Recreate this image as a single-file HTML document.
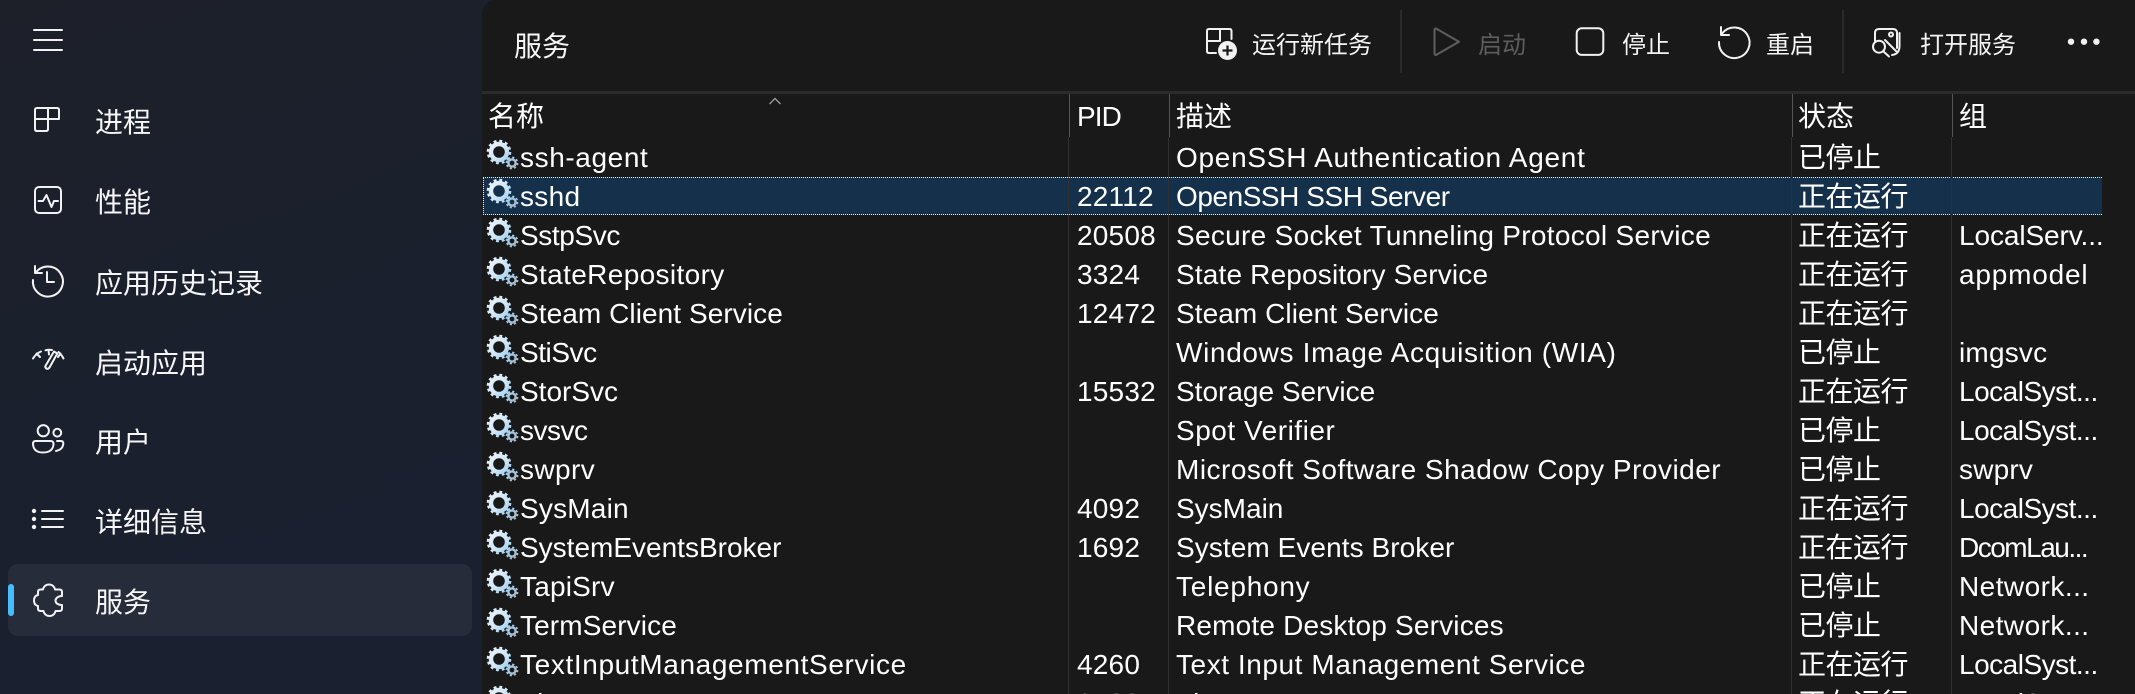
<!DOCTYPE html>
<html lang="zh"><head><meta charset="utf-8"><title>服务</title>
<style>
html,body{margin:0;padding:0;width:2135px;height:694px;overflow:hidden;background:#1b202d}
*{box-sizing:border-box}
body{position:relative;font-family:"Liberation Sans","Noto Sans CJK SC",sans-serif;color:#fff}
#side{position:absolute;left:0;top:0;width:482px;height:694px;background:linear-gradient(160deg,#1d2029 0%,#1b202d 40%,#1a2030 100%)}
#main{position:absolute;left:482px;top:0;width:1653px;height:694px;background:#191919;border-top-left-radius:14px}
.t{position:absolute;white-space:nowrap;font-family:"Noto Sans CJK SC",sans-serif}
.nav{font-size:28px;line-height:40px;left:95px;color:#f6f6f6}
.tb{font-size:24px;line-height:34px;top:26px;color:#f4f4f4}
.r{position:absolute;left:0;width:2135px;height:39px;font-size:28px;line-height:39px;white-space:nowrap}
.r span,.h span{position:absolute;top:0}
.n{left:520px}.p{left:1077px}.d{left:1176px}.r .s{left:1798px;top:-1px;letter-spacing:-.5px;font-family:"Noto Sans CJK SC",sans-serif}.g{left:1959px}
.h{position:absolute;left:0;top:96px;width:2135px;height:39px;font-size:28px;line-height:39px;font-family:"Noto Sans CJK SC",sans-serif}
#sel{position:absolute;left:483px;top:177px;width:1619px;height:38px;background:#14304a;border:1px dotted #e8eef4;border-right:none}
.v{position:absolute;width:1px;top:137px;height:557px;background:#303030}
.vh{position:absolute;width:1px;top:94px;height:43px;background:#555}
#hl{position:absolute;left:482px;top:91px;width:1653px;height:3px;background:#2b2b2b}
#ov{position:absolute;left:0;top:0}
</style></head><body>
<div id="side"></div>
<div id="main"></div>
<div style="position:absolute;left:8px;top:564px;width:464px;height:72px;border-radius:10px;background:#272c3b"></div>
<div style="position:absolute;left:8px;top:584px;width:6px;height:32px;border-radius:3px;background:#47bdff"></div>
<div class="t nav" style="top:101px">进程</div>
<div class="t nav" style="top:181px">性能</div>
<div class="t nav" style="top:262px">应用历史记录</div>
<div class="t nav" style="top:342px">启动应用</div>
<div class="t nav" style="top:421px">用户</div>
<div class="t nav" style="top:501px">详细信息</div>
<div class="t nav" style="top:581px">服务</div>
<div class="t" style="left:514px;top:25px;font-size:28px;line-height:40px;color:#f6f6f6">服务</div>
<div class="t tb" style="left:1252px">运行新任务</div>
<div class="t tb" style="left:1478px;color:#5d5d5d">启动</div>
<div class="t tb" style="left:1622px">停止</div>
<div class="t tb" style="left:1766px">重启</div>
<div class="t tb" style="left:1920px">打开服务</div>
<div style="position:absolute;left:1400px;top:10px;width:2px;height:63px;background:#2a2a2a"></div>
<div style="position:absolute;left:1842px;top:10px;width:2px;height:63px;background:#2a2a2a"></div>
<div id="hl"></div>
<div id="sel"></div>
<div class="vh" style="left:1069px"></div><div class="vh" style="left:1169px"></div><div class="vh" style="left:1792px"></div><div class="vh" style="left:1952px"></div>
<div class="v" style="left:1068px"></div><div class="v" style="left:1168px"></div><div class="v" style="left:1791px"></div><div class="v" style="left:1951px"></div>
<div class="h"><span style="left:488px">名称</span><span style="left:1077px;top:1px;letter-spacing:-.9px;font-family:'Liberation Sans',sans-serif">PID</span><span style="left:1176px">描述</span><span style="left:1798px">状态</span><span style="left:1959px">组</span></div>
<div class="r" style="top:138px"><span class="n" style="letter-spacing:.6px">ssh-agent</span><span class="d" style="letter-spacing:.73px">OpenSSH Authentication Agent</span><span class="s">已停止</span></div>
<div class="r" style="top:177px"><span class="n" style="letter-spacing:.3px">sshd</span><span class="p" style="letter-spacing:.2px">22112</span><span class="d" style="letter-spacing:-.45px">OpenSSH SSH Server</span><span class="s">正在运行</span></div>
<div class="r" style="top:216px"><span class="n" style="letter-spacing:-.39px">SstpSvc</span><span class="p" style="letter-spacing:.2px">20508</span><span class="d" style="letter-spacing:.3px">Secure Socket Tunneling Protocol Service</span><span class="s">正在运行</span><span class="g" style="letter-spacing:-.1px">LocalServ...</span></div>
<div class="r" style="top:255px"><span class="n" style="letter-spacing:.36px">StateRepository</span><span class="p" style="letter-spacing:.2px">3324</span><span class="d" style="letter-spacing:.17px">State Repository Service</span><span class="s">正在运行</span><span class="g" style="letter-spacing:.8px">appmodel</span></div>
<div class="r" style="top:294px"><span class="n" style="letter-spacing:.07px">Steam Client Service</span><span class="p" style="letter-spacing:.2px">12472</span><span class="d" style="letter-spacing:.07px">Steam Client Service</span><span class="s">正在运行</span></div>
<div class="r" style="top:333px"><span class="n" style="letter-spacing:-.45px">StiSvc</span><span class="d" style="letter-spacing:.66px">Windows Image Acquisition (WIA)</span><span class="s">已停止</span><span class="g" style="letter-spacing:.2px">imgsvc</span></div>
<div class="r" style="top:372px"><span class="n">StorSvc</span><span class="p" style="letter-spacing:.2px">15532</span><span class="d">Storage Service</span><span class="s">正在运行</span><span class="g" style="letter-spacing:-.5px">LocalSyst...</span></div>
<div class="r" style="top:411px"><span class="n" style="letter-spacing:-.5px">svsvc</span><span class="d" style="letter-spacing:.52px">Spot Verifier</span><span class="s">已停止</span><span class="g" style="letter-spacing:-.5px">LocalSyst...</span></div>
<div class="r" style="top:450px"><span class="n" style="letter-spacing:.4px">swprv</span><span class="d" style="letter-spacing:.49px">Microsoft Software Shadow Copy Provider</span><span class="s">已停止</span><span class="g" style="letter-spacing:.2px">swprv</span></div>
<div class="r" style="top:489px"><span class="n" style="letter-spacing:.2px">SysMain</span><span class="p" style="letter-spacing:.2px">4092</span><span class="d">SysMain</span><span class="s">正在运行</span><span class="g" style="letter-spacing:-.5px">LocalSyst...</span></div>
<div class="r" style="top:528px"><span class="n">SystemEventsBroker</span><span class="p" style="letter-spacing:.2px">1692</span><span class="d" style="letter-spacing:.07px">System Events Broker</span><span class="s">正在运行</span><span class="g" style="letter-spacing:-1.5px">DcomLau...</span></div>
<div class="r" style="top:567px"><span class="n" style="letter-spacing:.2px">TapiSrv</span><span class="d" style="letter-spacing:.75px">Telephony</span><span class="s">已停止</span><span class="g" style="letter-spacing:.45px">Network...</span></div>
<div class="r" style="top:606px"><span class="n" style="letter-spacing:.12px">TermService</span><span class="d" style="letter-spacing:.18px">Remote Desktop Services</span><span class="s">已停止</span><span class="g" style="letter-spacing:.45px">Network...</span></div>
<div class="r" style="top:645px"><span class="n" style="letter-spacing:.63px">TextInputManagementService</span><span class="p" style="letter-spacing:.2px">4260</span><span class="d" style="letter-spacing:.56px">Text Input Management Service</span><span class="s">正在运行</span><span class="g" style="letter-spacing:-.5px">LocalSyst...</span></div>
<div class="r" style="top:684px"><span class="n">Themes</span><span class="p" style="letter-spacing:.2px">3100</span><span class="d">Themes</span><span class="s">正在运行</span><span class="g" style="letter-spacing:-.5px">LocalSyst...</span></div>
<svg id="ov" width="2135" height="694" viewBox="0 0 2135 694" fill="none">
<defs>
<linearGradient id="gr" gradientUnits="userSpaceOnUse" x1="0" y1="0" x2="30" y2="28">
<stop offset="0" stop-color="#eef5fa"/><stop offset=".45" stop-color="#cfe6f6"/><stop offset=".7" stop-color="#a3cfee"/><stop offset="1" stop-color="#a8b2be"/>
</linearGradient>
<symbol id="gear" width="32" height="30" viewBox="0 0 32 30" overflow="visible">
<circle cx="11" cy="12" r="8" stroke="url(#gr)" stroke-width="4.4"/>
<circle cx="11" cy="12" r="11" stroke="url(#gr)" stroke-width="2.6" stroke-dasharray="2.88 2.88"/>
<circle cx="24" cy="23" r="3.6" stroke="url(#gr)" stroke-width="2.4"/>
<circle cx="24" cy="23" r="5.5" stroke="url(#gr)" stroke-width="1.8" stroke-dasharray="2.16 2.16"/>
</symbol>
</defs>
<use href="#gear" x="488" y="140"/><use href="#gear" x="488" y="179"/><use href="#gear" x="488" y="218"/><use href="#gear" x="488" y="257"/><use href="#gear" x="488" y="296"/><use href="#gear" x="488" y="335"/><use href="#gear" x="488" y="374"/><use href="#gear" x="488" y="413"/><use href="#gear" x="488" y="452"/><use href="#gear" x="488" y="491"/><use href="#gear" x="488" y="530"/><use href="#gear" x="488" y="569"/><use href="#gear" x="488" y="608"/><use href="#gear" x="488" y="647"/><use href="#gear" x="488" y="686"/>
<path d="M769.5 104L775 98.5L780.5 104" stroke="#9a9a9a" stroke-width="1.4"/>
<g stroke="#f2f2f2" stroke-width="2" stroke-linecap="round" stroke-linejoin="round">
<path d="M34 30H62M34 40H62M34 50H62"/>
<path d="M48 119V108H37Q35 108 35 110V129Q35 131 37 131H46Q48 131 48 129V119H35M48 119H59V110Q59 108 57 108H48"/>
<rect x="35" y="187" width="26" height="26" rx="4"/>
<path d="M38.5 201H43L46.5 195L51.5 207L54 201H58"/>
<path d="M35.6 273A15 15 0 1 1 33 280M35 266V273H42M47 272V282H54"/>
<path d="M33 358.5Q36 353.5 41 351.5M45.5 350.3Q48.5 349.5 52 350M58.5 352Q61.5 354.5 63.5 358.5M36.5 353.5L40 357M48.5 350L49 354.5M60.5 353.5L58 357"/>
<path d="M54 351.5L57.3 353.5L49.5 367.5Q48 369.5 46.3 368.5Q44.7 367.5 45.7 365.5Z"/>
<circle cx="43.3" cy="430.7" r="5.6"/><circle cx="57.3" cy="432.7" r="3.9"/>
<path d="M35.5 441H50.5Q53.5 441 53.5 444Q53 452.5 43 452.5Q33.5 452.5 33 444Q33 441 35.5 441Z"/>
<path d="M57 441H61Q63.3 441 63.3 443.5Q63 449.5 56 451"/>
<path d="M42 511H63M42 519H63M42 527H63"/>
<path d="M43 589.5C43.5 586.5 46 584.5 49 584.5C52 584.5 54.5 586.5 55 589.5H59.5Q62 589.5 62 592V596C58.5 596 55.5 598 55.5 600.5C55.5 603.5 58.5 605 62 605V608.5Q62 611 59.5 611H55.5C55 614 52.5 616 49.5 616C46.5 616 44 614 43.5 611H40.5Q38 611 38 608.5V606C35.5 605.5 34 603.5 34 600.5C34 597.5 35.5 595.5 38 595V592Q38 589.5 40.5 589.5Z"/>
<path d="M1216 53H1209Q1207 53 1207 51V31Q1207 29 1209 29H1229.5Q1231.5 29 1231.5 31V39M1207 41H1220M1220 29V41"/>
<path d="M1436 55Q1434.5 55 1434.5 53V30Q1434.5 28.5 1436 28.5L1459 41.7Z" stroke="#5e5e5e"/>
<rect x="1576.7" y="28.3" width="26.6" height="26.6" rx="5"/>
<path d="M1722.5 33A15.3 15.3 0 1 1 1719 42M1721 27V35H1729"/>
<path d="M1875 41V33Q1875 29 1879 29H1893Q1897 29 1897 33V48M1885 40L1896 51M1892 55Q1899.5 54 1899.5 46V33"/>
<circle cx="1891" cy="34.5" r="2"/><circle cx="1879" cy="46.7" r="6"/><path d="M1883.5 51.5L1889 56.5"/>
</g>
<g fill="#f2f2f2">
<circle cx="34" cy="511" r="2.2"/><circle cx="34" cy="519" r="2.2"/><circle cx="34" cy="527" r="2.2"/>
<circle cx="2071" cy="41.7" r="3.2"/><circle cx="2084" cy="41.7" r="3.2"/><circle cx="2096.4" cy="41.7" r="3.2"/>
<circle cx="1227.5" cy="50.5" r="9.5"/>
</g>
<path d="M1227.5 45.5V55.5M1222.5 50.5H1232.5" stroke="#191919" stroke-width="2.2"/>
</svg>
</body></html>
